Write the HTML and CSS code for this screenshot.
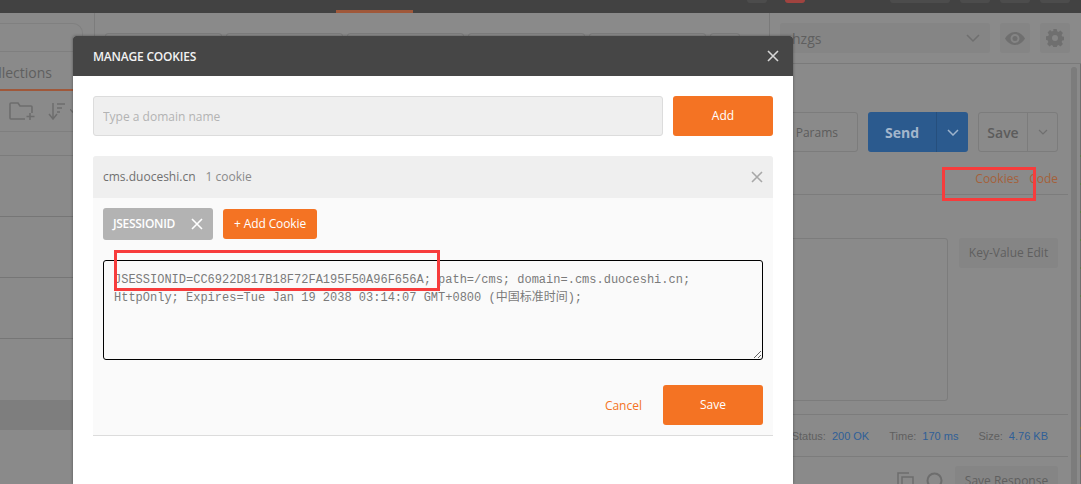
FILE: index.html
```html
<!DOCTYPE html>
<html lang="en">
<head>
<meta charset="utf-8">
<title>Manage Cookies</title>
<link rel="stylesheet" href="styles.css">
</head>
<body>
<div class="app">
  <header class="topbar">
    <div class="topbar-left"><span class="top-tab"></span></div>
    <div class="topbar-right">
      <span class="top-btn top-round"></span>
      <span class="top-btn top-red"></span>
      <span class="top-btn top-wide"></span>
      <span class="top-btn"></span>
      <span class="top-btn"></span>
      <span class="top-btn"></span>
    </div>
  </header>
  <div class="workspace">
    <aside class="sidebar">
      <div class="side-search-row"><div class="side-search"></div></div>
      <div class="side-tabs"><span>Collections</span></div>
      <div class="side-tools">
        <svg class="ico-folder" width="26" height="19" viewBox="0 0 26 19" fill="none" stroke="#6d6d6d" stroke-width="1.600"><path d="M16 17H2a1 1 0 0 1-1-1V2a1 1 0 0 1 1-1h7l2 3h11a1 1 0 0 1 1 1v6"/><path d="M21 11v7M17.500 14.500h8"/></svg>
        <svg class="ico-sort" width="18" height="18" viewBox="0 0 18 18" fill="none" stroke="#6d6d6d" stroke-width="1.500"><path d="M5 1v15M1 12l4 5 4-5M9 2h8M9 6h5M9 10h3"/></svg>
        <svg class="ico-caret" width="5" height="4" viewBox="0 0 5 4" fill="none" stroke="#6d6d6d" stroke-width="1.200"><path d="M0 0l2.500 3L5 0"/></svg>
      </div>
      <div class="side-row side-row-a"></div>
      <div class="side-row"></div>
      <div class="side-row"></div>
      <div class="side-row"></div>
      <div class="side-row side-row-plain"></div>
      <div class="side-band"></div>
    </aside>
    <main class="main">
      <div class="strip">
        <div class="tabs">
          <span class="tab"></span><span class="tab"></span><span class="tab"></span>
          <span class="tab"></span><span class="tab"></span><span class="tab tab-plus"></span>
        </div>
        <div class="env">
          <div class="env-select"><span>hzgs</span>
            <svg width="14" height="9" viewBox="0 0 14 9" fill="none" stroke="#6f6f6f" stroke-width="1.500"><path d="M1 1l6 6 6-6"/></svg>
          </div>
          <div class="env-btn">
            <svg width="20" height="13" viewBox="0 0 20 13"><path fill="#6f6f6f" d="M10 0C5.500 0 2 3 0 6.500 2 10 5.500 13 10 13s8-3 10-6.500C18 3 14.500 0 10 0zm0 11a4.500 4.500 0 1 1 0-9 4.500 4.500 0 0 1 0 9z"/><circle cx="10" cy="6.500" r="2.500" fill="#6f6f6f"/></svg>
          </div>
          <div class="env-btn">
            <svg width="18" height="18" viewBox="0 0 18 18"><path fill="#6f6f6f" fill-rule="evenodd" d="M7.300 0h3.400l.4 2.300 1.500.6L14.500 1.600l2.400 2.400-1.300 1.900.6 1.500 2.300.4v3.400l-2.300.4-.6 1.500 1.300 1.900-2.400 2.400-1.900-1.300-1.500.6-.4 2.300H7.300l-.4-2.300-1.500-.6-1.900 1.300-2.400-2.400 1.300-1.900-.6-1.500L0 10.700V7.300l2.300-.4.6-1.500L1.600 3.500 4 1.100l1.900 1.300 1.500-.6zM9 6a3 3 0 1 0 0 6 3 3 0 0 0 0-6z"/></svg>
          </div>
        </div>
      </div>
      <div class="content">
        <div class="pane">
          <div class="request">
            <span class="btn params">Params</span>
            <span class="send"><b>Send</b><i><svg width="12" height="7" viewBox="0 0 12 7" fill="none" stroke="#9db3cc" stroke-width="1.500"><path d="M1 1l5 5 5-5"/></svg></i></span>
            <span class="save"><b>Save</b><i><svg width="10" height="6" viewBox="0 0 10 6" fill="none" stroke="#6f6f6f" stroke-width="1.200"><path d="M1 1l4 4 4-4"/></svg></i></span>
          </div>
          <div class="links"><span>Cookies</span><span>Code</span></div>
          <div class="body-row">
            <div class="raw"></div>
            <span class="kv">Key-Value Edit</span>
          </div>
          <div class="status">
            <span>Status:</span><em>200 OK</em>
            <span class="gap">Time:</span><em>170 ms</em>
            <span class="gap">Size:</span><em>4.76 KB</em>
          </div>
          <div class="resp-tools">
            <svg width="18" height="18" viewBox="0 0 18 18" fill="none" stroke="#6d6d6d" stroke-width="1.500"><path d="M1 15V1h11M5 18V5h11v13"/></svg>
            <svg width="18" height="18" viewBox="0 0 18 18" fill="none" stroke="#6d6d6d" stroke-width="2"><circle cx="8.500" cy="8.500" r="7"/></svg>
            <span class="save-resp">Save Response</span>
          </div>
        </div>
        <div class="scrollbar"></div>
        <div class="gutter">
          <i></i><i></i><i></i><i></i><i></i><i></i>
          <i class="warn"></i><i class="warn"></i>
        </div>
      </div>
    </main>
  </div>
</div>

<section class="modal">
  <header class="modal-head">
    <h1>MANAGE COOKIES</h1>
    <svg width="12" height="12" viewBox="0 0 12 12" fill="none" stroke="#d6d6d6" stroke-width="1.600"><path d="M1 1l10 10M11 1L1 11"/></svg>
  </header>
  <div class="modal-body">
    <div class="add-row">
      <input class="domain" type="text" placeholder="Type a domain name">
      <button class="orange big">Add</button>
    </div>
    <div class="card">
      <div class="card-head">
        <span>cms.duoceshi.cn</span><span class="count">1 cookie</span>
        <svg width="12" height="12" viewBox="0 0 12 12" fill="none" stroke="#a8a8a8" stroke-width="1.600"><path d="M1 1l10 10M11 1L1 11"/></svg>
      </div>
      <div class="card-body">
        <div class="chips">
          <span class="chip">JSESSIONID
            <svg width="12" height="12" viewBox="0 0 12 12" fill="none" stroke="#fff" stroke-width="1.600"><path d="M1 1l10 10M11 1L1 11"/></svg>
          </span>
          <button class="orange small">+ Add Cookie</button>
        </div>
        <textarea class="cookie" spellcheck="false">JSESSIONID=CC6922D817B18F72FA195F50A96F656A; path=/cms; domain=.cms.duoceshi.cn; HttpOnly; Expires=Tue Jan 19 2038 03:14:07 GMT+0800 (中国标准时间);</textarea>
        <div class="actions">
          <span class="cancel">Cancel</span>
          <button class="orange big">Save</button>
        </div>
      </div>
    </div>
  </div>
</section>

<div class="mark mark-cookie"></div>
<div class="mark mark-links"></div>
</body>
</html>
```
FILE: styles.css
```css
* { box-sizing: border-box; }
html, body { margin: 0; height: 484px; overflow: hidden; }
body { position: relative; font-family: "Open Sans", "Noto Sans", sans-serif; background: #8a8a8a; color: #5c5c5c; }

.app { height: 484px; display: flex; flex-direction: column; }

/* top bar */
.topbar { height: 13px; flex: none; background: #424242; display: flex; justify-content: space-between; overflow: hidden; }
.topbar-left { padding-left: 336px; }
.top-tab { display: block; width: 77px; height: 13px; border-bottom: 3px solid #a0583a; }
.topbar-right { display: flex; gap: 10px; padding-right: 11px; box-sizing: content-box; height: 3px; }
.top-btn { display: block; width: 30px; height: 3px; background: #4c4c4c; border-radius: 0 0 3px 3px; }
.top-round { width: 20px; margin-right: 8px; border-radius: 0 0 10px 10px; }
.top-red { width: 20px; margin-right: 75px; background: #a0433f; border-radius: 0 0 10px 10px; }
.top-wide { width: 60px; }

.workspace { flex: 1; display: flex; min-height: 0; }

/* sidebar */
.sidebar { width: 95px; flex: none; border-right: 1px solid #7c7c7c; overflow: hidden; display: flex; flex-direction: column; }
.side-search-row { height: 39px; flex: none; padding: 10px 0 0; border-bottom: 1px solid #7f7f7f; overflow: hidden; }
.side-search { width: 83px; height: 30px; border: 1px solid #808080; border-left: 0; border-radius: 0 10px 0 0; }
.side-tabs { height: 39px; flex: none; display: flex; justify-content: flex-end; padding: 11px 42px 0 0; border-bottom: 2px solid #a0583a; font-size: 14px; line-height: 19px; color: #5f5f5f; white-space: nowrap; }
.side-tabs span { flex: none; }
.side-tools { height: 41px; flex: none; display: flex; align-items: center; padding-left: 9px; border-bottom: 1px solid #7f7f7f; }
.side-tools svg { flex: none; }
.ico-sort { margin-left: 13px; }
.ico-caret { margin-left: 4px; }
.side-row { height: 61px; flex: none; border-bottom: 1px solid #767676; }
.side-row-a { height: 24px; border-color: #7c7c7c; }
.side-row-plain { border-bottom: 0; }
.side-band { height: 30px; background: #7e7e7e; flex: none; }

/* main */
.main { flex: 1; min-width: 0; display: flex; flex-direction: column; }
.strip { height: 51px; flex: none; display: flex; border-bottom: 1px solid #7a7a7a; }
.tabs { width: 675px; flex: none; border-right: 1px solid #7a7a7a; padding: 20px 0 0 10px; display: flex; gap: 4px; overflow: hidden; }
.tab { width: 117px; height: 30px; flex: none; border: 1px solid #7c7c7c; border-radius: 3px 3px 0 0; }
.tab-plus { width: 30px; }
.env { flex: 1; display: flex; gap: 10px; padding: 10px 11px 0 10px; }
.env-select { width: 210px; height: 30px; background: #858585; border-radius: 3px; display: flex; justify-content: space-between; align-items: center; padding: 0 10px 0 12px; font-size: 14px; color: #5f5f5f; }
.env-btn { width: 30px; height: 30px; background: #858585; border-radius: 3px; display: flex; align-items: center; justify-content: center; }

.content { flex: 1; display: flex; min-height: 0; }
.pane { width: 973px; flex: none; padding-top: 48px; display: flex; flex-direction: column; }
.scrollbar { width: 6px; height: 420px; margin: 3px 0 0 3px; background: #7c7c7c; border-radius: 3px; flex: none; }
.gutter { width: 1px; margin-left: 3px; flex: none; background: #6e6e6e; padding-top: 91px; display: flex; flex-direction: column; gap: 26px; }
.gutter i { display: block; height: 2px; background: #5d7a4c; flex: none; }
.gutter .warn { background: #8a7a3a; }
.gutter i:nth-child(7) { margin-top: 104px; }

.request { height: 40px; flex: none; display: flex; justify-content: flex-end; gap: 10px; padding-right: 10px; }
.btn, .save { border: 1px solid #7c7c7c; border-radius: 3px; }
.params { width: 90px; display: flex; align-items: center; justify-content: flex-end; padding-right: 19px; font-size: 12px; color: #5c5c5c; }
.send, .save { display: flex; height: 40px; }
.send { width: 100px; background: #2b5a8e; border-radius: 3px; }
.send b { width: 69px; border-right: 1px solid #264f7d; color: #a3b6cc; font-size: 14px; line-height: 41px; text-align: center; font-weight: 700; }
.send i, .save i { flex: 1; display: flex; align-items: center; justify-content: center; }
.save { width: 80px; }
.save b { width: 49px; border-right: 1px solid #7c7c7c; color: #5c5c5c; font-size: 14px; line-height: 40px; text-align: center; font-weight: 600; }

.links { height: 43px; flex: none; border-bottom: 1px solid #7c7c7c; display: flex; justify-content: flex-end; align-items: center; gap: 10px; padding: 11px 10px 0 0; font-size: 12px; color: #a5613a; }

.body-row { height: 219px; flex: none; display: flex; padding-top: 43px; justify-content: flex-end; gap: 11px; padding-right: 10px; }
.raw { width: 300px; height: 163px; border: 1px solid #7c7c7c; border-radius: 3px; }
.kv { width: 99px; height: 30px; background: #858585; border-radius: 3px; font-size: 12px; line-height: 30px; text-align: center; color: #5f5f5f; white-space: nowrap; }

.status { height: 43px; flex: none; border-top: 1px solid #7c7c7c; border-bottom: 1px solid #7c7c7c; display: flex; justify-content: flex-end; align-items: center; padding-right: 20px; gap: 6px; font-family: "Liberation Sans", sans-serif; font-size: 11px; color: #5f5f5f; }
.status em { font-style: normal; color: #2f5f98; }
.status .gap { margin-left: 14px; }

.resp-tools { display: flex; justify-content: flex-end; align-items: flex-start; gap: 11px; padding: 9px 10px 0 0; }
.resp-tools svg { margin-top: 6px; flex: none; }
.save-resp { width: 103px; height: 30px; flex: none; background: #858585; border-radius: 3px; font-size: 12px; line-height: 30px; text-align: center; color: #5f5f5f; white-space: nowrap; }

/* modal */
.modal { position: absolute; left: 73px; top: 36px; width: 720px; height: 448px; background: #fff; box-shadow: 0 0 3px rgba(0,0,0,.4); border-radius: 3px 3px 0 0; }
.modal-head { height: 40px; background: #464646; display: flex; align-items: center; justify-content: space-between; padding: 0 14px 0 20px; border-radius: 3px 3px 0 0; }
.modal-head h1 { margin: 0; font-size: 12px; font-weight: 600; color: #f2f2f2; letter-spacing: -0.2px; }
.modal-body { padding: 20px; }
.add-row { display: flex; gap: 10px; }
.domain { width: 570px; height: 40px; background: #efefef; border: 1px solid #dcdcdc; border-radius: 3px; padding: 0 9px; font: 12px "Open Sans", sans-serif; outline: 0; }
.domain::placeholder { color: #b3b3b3; opacity: 1; }
.orange { border: 0; background: #f47323; color: #fff; font-family: "Open Sans", sans-serif; font-weight: 500; border-radius: 3px; padding: 0 0 2px; }
.big { width: 100px; height: 40px; font-size: 12px; }
.small { width: 94px; height: 30px; font-size: 12px; letter-spacing: -0.1px; }

.card { margin-top: 20px; background: #fafafa; height: 280px; border-bottom: 1px solid #dcdcdc; border-radius: 3px 3px 0 0; }
.card-head { height: 42px; background: #efefef; display: flex; align-items: center; padding: 0 10px 2px 10px; font-size: 12px; color: #707070; border-radius: 3px 3px 0 0; }
.count { margin-left: 10px; color: #8a8a8a; flex: 1; }
.card-head svg { margin-top: 2px; }
.card-body { padding: 10px 10px 0; }
.chips { display: flex; gap: 10px; align-items: center; }
.chip { width: 110px; height: 32px; background: #b3b3b3; border-radius: 3px; color: #fff; font-size: 12px; font-weight: 600; letter-spacing: -0.3px; display: flex; align-items: center; justify-content: space-between; padding: 0 10px 2px 10px; }
.chip svg { margin-top: 2px; }
.cookie { display: block; width: 660px; height: 100px; margin-top: 20px; padding: 10px 10px; border: 1px solid #000; border-radius: 3px; background: #fafafa; color: #7a7a7a; font: 12px/18px "Liberation Mono", "Noto Sans CJK SC", monospace; outline: 0; }
.actions { display: flex; justify-content: flex-end; align-items: center; gap: 21px; margin-top: 25px; }
.cancel { font-size: 12px; color: #f47323; }

/* red annotations */
.mark { position: absolute; border: 3px solid #f73c3c; }
.mark-cookie { left: 114px; top: 250px; width: 326px; height: 41px; }
.mark-links { left: 942px; top: 167px; width: 94px; height: 34px; }
```
